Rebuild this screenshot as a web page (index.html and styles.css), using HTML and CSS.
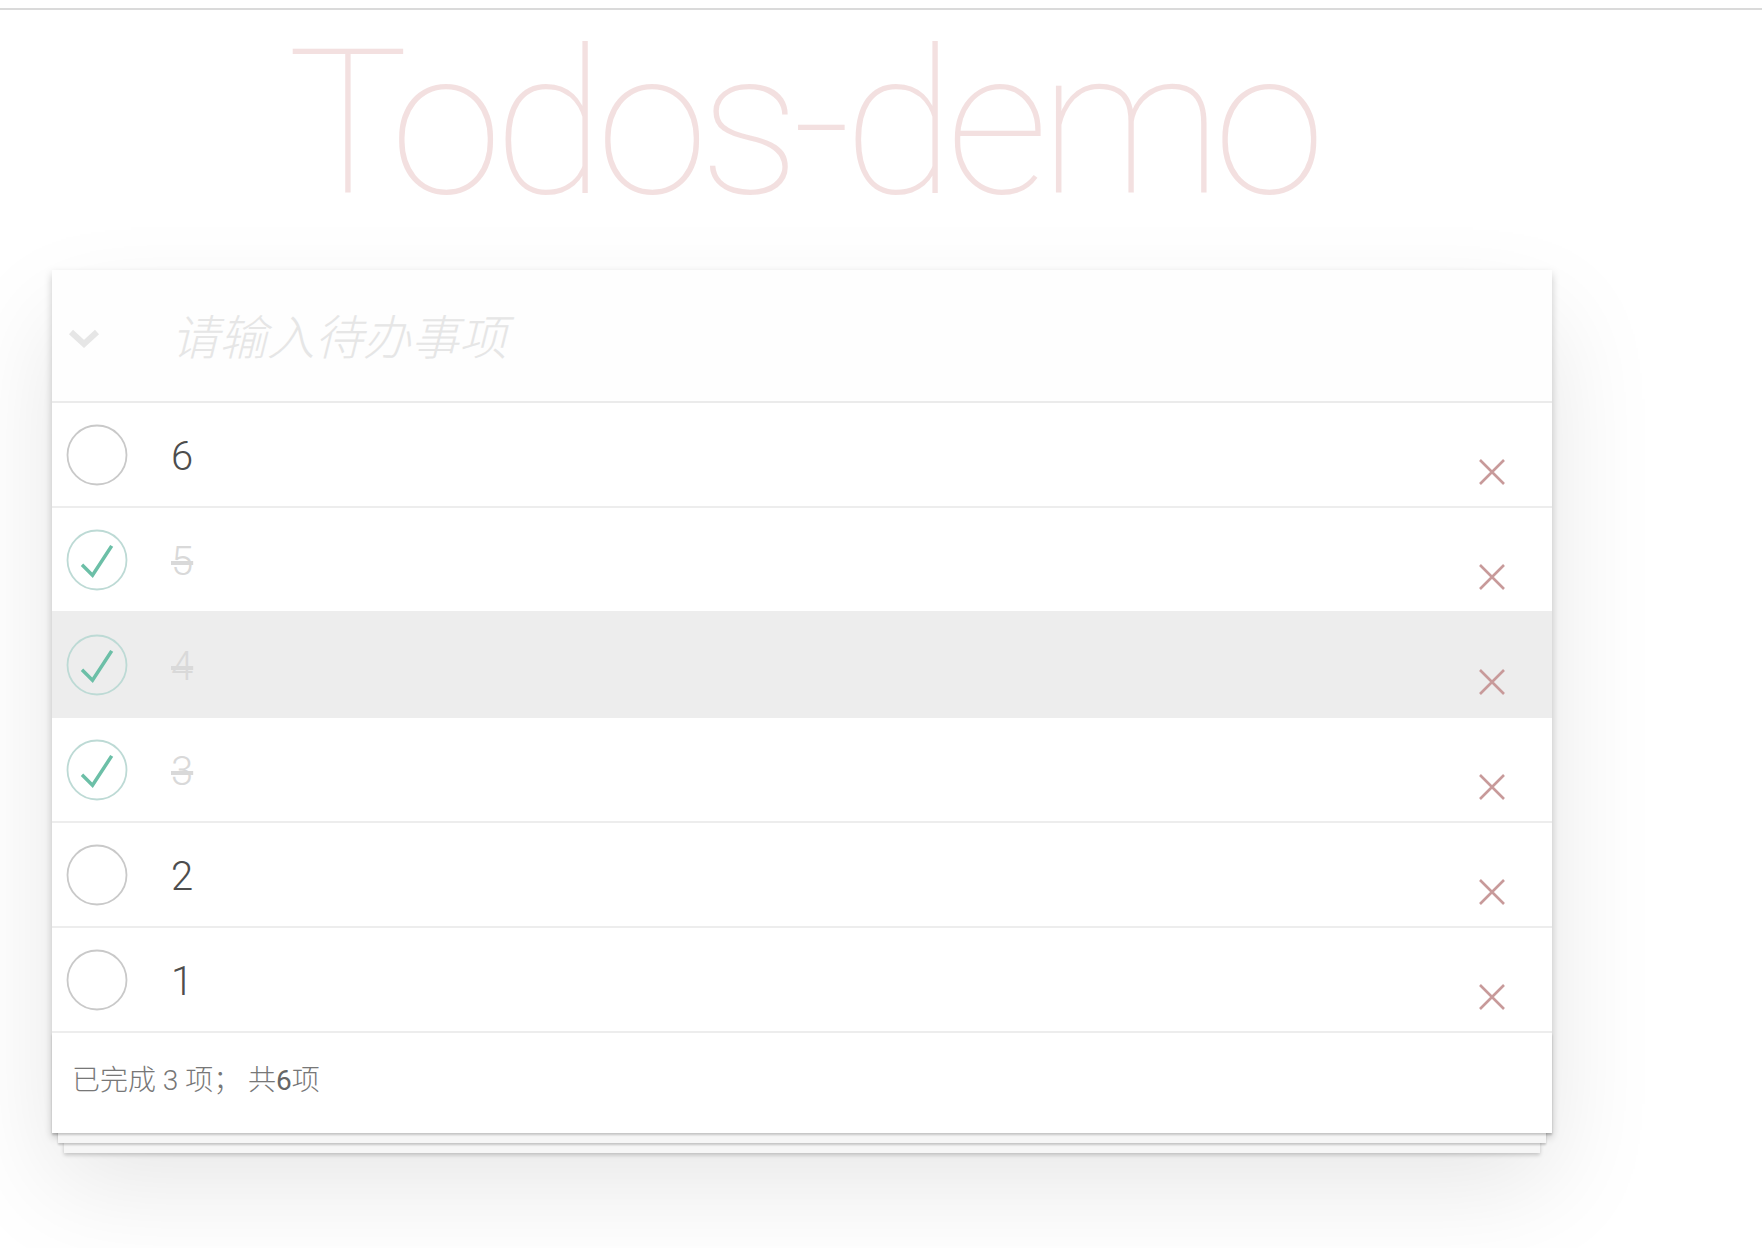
FILE: index.html
```html
<!DOCTYPE html>
<html lang="zh-CN">
<head>
<meta charset="utf-8">
<title>Todos-demo</title>
<link rel="stylesheet" href="styles.css">
</head>
<body>
<div class="topbar"></div>
<div class="page">
  <h1 class="title">Todos-demo</h1>
  <section class="todoapp">
    <header class="new-row">
      <span class="toggle-all">
        <svg width="32" height="20" viewBox="0 0 32 20"><polyline points="3,3 16,15 29,3" fill="none" stroke="#e6e6e6" stroke-width="6"/></svg>
      </span>
      <input class="new-todo" placeholder="请输入待办事项">
    </header>
    <ul class="todo-list">
      <li class="todo">
        <span class="toggle"><svg width="62" height="62" viewBox="-1 -1 62 62"><circle cx="30" cy="30" r="29.5" fill="none" stroke="#c9c9c9" stroke-width="1.8"/></svg></span>
        <label class="todo-label">6</label>
        <span class="destroy"><svg width="26" height="26" viewBox="0 0 26 26"><path d="M1 1L25 25M25 1L1 25" stroke="#c89a9a" stroke-width="2.6"/></svg></span>
      </li>
      <li class="todo completed">
        <span class="toggle"><svg width="62" height="62" viewBox="-1 -1 62 62"><circle cx="30" cy="30" r="29.5" fill="none" stroke="#bddad5" stroke-width="1.8"/><path fill="#6cbfa7" d="M43.2 15L25.2 42.6 16.2 33.6l-2.4 2.4 12 12 20.4-31.2z"/></svg></span>
        <label class="todo-label">5</label>
        <span class="destroy"><svg width="26" height="26" viewBox="0 0 26 26"><path d="M1 1L25 25M25 1L1 25" stroke="#c89a9a" stroke-width="2.6"/></svg></span>
      </li>
      <li class="todo completed hover">
        <span class="toggle"><svg width="62" height="62" viewBox="-1 -1 62 62"><circle cx="30" cy="30" r="29.5" fill="none" stroke="#bddad5" stroke-width="1.8"/><path fill="#6cbfa7" d="M43.2 15L25.2 42.6 16.2 33.6l-2.4 2.4 12 12 20.4-31.2z"/></svg></span>
        <label class="todo-label">4</label>
        <span class="destroy"><svg width="26" height="26" viewBox="0 0 26 26"><path d="M1 1L25 25M25 1L1 25" stroke="#c89a9a" stroke-width="2.6"/></svg></span>
      </li>
      <li class="todo completed">
        <span class="toggle"><svg width="62" height="62" viewBox="-1 -1 62 62"><circle cx="30" cy="30" r="29.5" fill="none" stroke="#bddad5" stroke-width="1.8"/><path fill="#6cbfa7" d="M43.2 15L25.2 42.6 16.2 33.6l-2.4 2.4 12 12 20.4-31.2z"/></svg></span>
        <label class="todo-label">3</label>
        <span class="destroy"><svg width="26" height="26" viewBox="0 0 26 26"><path d="M1 1L25 25M25 1L1 25" stroke="#c89a9a" stroke-width="2.6"/></svg></span>
      </li>
      <li class="todo">
        <span class="toggle"><svg width="62" height="62" viewBox="-1 -1 62 62"><circle cx="30" cy="30" r="29.5" fill="none" stroke="#c9c9c9" stroke-width="1.8"/></svg></span>
        <label class="todo-label">2</label>
        <span class="destroy"><svg width="26" height="26" viewBox="0 0 26 26"><path d="M1 1L25 25M25 1L1 25" stroke="#c89a9a" stroke-width="2.6"/></svg></span>
      </li>
      <li class="todo">
        <span class="toggle"><svg width="62" height="62" viewBox="-1 -1 62 62"><circle cx="30" cy="30" r="29.5" fill="none" stroke="#c9c9c9" stroke-width="1.8"/></svg></span>
        <label class="todo-label">1</label>
        <span class="destroy"><svg width="26" height="26" viewBox="0 0 26 26"><path d="M1 1L25 25M25 1L1 25" stroke="#c89a9a" stroke-width="2.6"/></svg></span>
      </li>
    </ul>
    <footer class="footer"><span class="count">已完成 3 项； 共<strong>6</strong>项</span></footer>
  </section>
</div>
</body>
</html>
```

FILE: styles.css
```css
html, body {
  margin: 0;
  padding: 0;
  background: #ffffff;
}

body {
  min-height: 1248px;
  font-family: Roboto, "Noto Sans CJK SC", sans-serif;
  font-weight: 300;
  color: #4d4d4d;
}

.topbar {
  height: 8px;
  border-bottom: 2px solid #dadada;
}

.page {
  width: 1500px;
  padding-left: 52px;
  padding-bottom: 116px;
}

.title {
  margin: 14px 0 46px 0;
  font-family: Roboto, sans-serif;
  font-weight: 100;
  font-size: 203px;
  line-height: 200px;
  text-align: center;
  letter-spacing: -8.5px;
  color: rgba(175, 47, 47, 0.15);
}

.todoapp {
  position: relative;
  background: #fff;
  box-shadow: 0 4px 8px 0 rgba(0, 0, 0, 0.2), 0 50px 100px 0 rgba(0, 0, 0, 0.1);
}

.new-row {
  display: flex;
  align-items: center;
  height: 131px;
  border-bottom: 2px solid #ebebeb;
  background: rgba(0, 0, 0, 0.003);
}

.toggle-all {
  display: flex;
  margin-left: 16px;
  margin-right: 71px;
  margin-top: 6px;
}

.new-todo {
  flex: 1;
  border: none;
  outline: none;
  background: transparent;
  padding: 6px 0 0 0;
  font-family: Roboto, "Noto Sans CJK SC", sans-serif;
  font-weight: 300;
  font-size: 48px;
  color: #4d4d4d;
}

.new-todo::placeholder {
  font-style: italic;
  font-weight: 300;
  color: #e6e6e6;
}

.todo-list {
  list-style: none;
  margin: 0;
  padding: 0;
}

.todo {
  display: flex;
  align-items: center;
  height: 103px;
  border-bottom: 2px solid #ededed;
}

.todo.hover {
  background: #ededed;
}

.toggle {
  display: flex;
  margin-left: 14px;
}

.todo-label {
  flex: 1;
  margin-left: 43px;
  padding-top: 4px;
  font-size: 40px;
  line-height: 48px;
  color: #4d4d4d;
}

.todo.completed .todo-label {
  color: #d9d9d9;
  text-decoration: line-through;
}

.destroy {
  display: flex;
  align-self: flex-end;
  margin-bottom: 21px;
  margin-right: 47px;
}

.footer {
  position: relative;
  display: flex;
  align-items: center;
  height: 100px;
  box-sizing: border-box;
  padding: 0 20px 10px 20px;
  font-size: 28px;
  color: #777;
}

.footer::before {
  content: '';
  position: absolute;
  left: 0;
  right: 0;
  bottom: 0;
  height: 100px;
  box-shadow: 0 2px 2px rgba(0, 0, 0, 0.2),
              0 16px 0 -6px #f6f6f6,
              0 18px 2px -6px rgba(0, 0, 0, 0.2),
              0 32px 0 -12px #f6f6f6,
              0 34px 4px -12px rgba(0, 0, 0, 0.2);
  pointer-events: none;
  z-index: 0;
}

.count {
  position: relative;
}

.count strong {
  font-weight: 400;
  color: #666;
}
```
